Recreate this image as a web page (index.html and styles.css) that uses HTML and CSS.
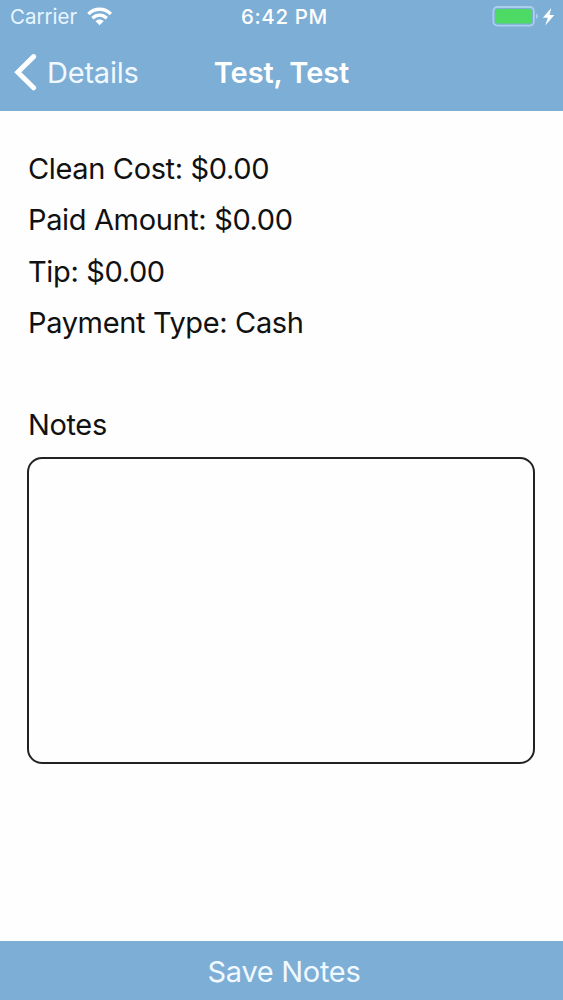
FILE: index.html
```
<!DOCTYPE html>
<html lang="en">
<head>
    <meta charset="UTF-8">
    <meta name="viewport" content="width=device-width, initial-scale=1.0">
    <title>Test, Test</title>
    <link rel="stylesheet" href="styles.css">
</head>
<body>

    <header class="header">
        <!-- Status bar -->
        <div class="status-bar">
            <div class="status-left">
                <span class="carrier">Carrier</span>
                <svg class="wifi" width="26" height="19" viewBox="0 0 26 19">
                    <path d="M1.4 7C7.8 .8 17.4 .8 23.8 7" fill="none" stroke="#fff" stroke-width="3.5"/>
                    <path d="M5.4 11.2C9.6 7.2 15.6 7.2 19.8 11.2" fill="none" stroke="#fff" stroke-width="3.3"/>
                    <path d="M8.4 14.1C10.8 11.9 14.4 11.9 16.8 14.1L12.6 18.3Z" fill="#fff"/>
                </svg>
            </div>
            <span class="clock">6:42 PM</span>
            <div class="status-right">
                <svg class="battery" width="64" height="22" viewBox="0 0 64 22">
                    <rect x="1.4" y="1" width="40.5" height="18.6" rx="4" fill="none" stroke="#a9cfea" stroke-width="1.8"/>
                    <rect x="3.6" y="3" width="36" height="14.6" rx="1.8" fill="#4cd964"/>
                    <path d="M44 7.5Q46 8.3 46 10.3Q46 12.3 44 13.1Z" fill="#a9cfea"/>
                    <path d="M59.2 2L50.8 11.8H55.8L53.2 19.4L62.4 8.9H57.6Z" fill="#fff"/>
                </svg>
            </div>
        </div>

        <!-- Navigation bar -->
        <nav class="nav-bar">
            <a class="back">
                <svg class="chevron" width="24" height="38" viewBox="0 0 24 38">
                    <path d="M20.6 3.6L4.8 19.2L20.6 34.8" fill="none" stroke="#fff" stroke-width="5" stroke-linecap="round" stroke-linejoin="miter"/>
                </svg>
                <span class="back-label">Details</span>
            </a>
            <h1 class="title">Test, Test</h1>
        </nav>
    </header>

    <main class="content">
        <p class="row">Clean Cost: $0.00</p>
        <p class="row">Paid Amount: $0.00</p>
        <p class="row">Tip: $0.00</p>
        <p class="row">Payment Type: Cash</p>

        <label class="notes-label" for="notes">Notes</label>
        <textarea class="notes" id="notes"></textarea>
    </main>

    <button class="save">Save Notes</button>

</body>
</html>
```

FILE: styles.css
```
* {
    margin: 0;
    padding: 0;
    box-sizing: border-box;
}

body {
    font-family: Inter, "Liberation Sans", sans-serif;
    font-size: 29px;
    background-color: #fefefe;
    color: #111;
    height: 100vh;
    display: flex;
    flex-direction: column;
    overflow: hidden;
}

/* Header */
.header {
    height: 111px;
    background-color: #7daed6;
    color: #fff;
}

.status-bar {
    height: 33px;
    padding-left: 10px;
    display: grid;
    grid-template-columns: 231px auto 1fr;
    align-items: center;
    font-size: 20.5px;
}

.status-left {
    display: flex;
    align-items: center;
    gap: 10px;
}

.carrier {
    color: #eaf6ff;
}

.clock {
    font-weight: 500;
    letter-spacing: 0.6px;
}

.status-right {
    display: flex;
    justify-content: flex-end;
    padding-right: 7px;
}

.nav-bar {
    height: 78px;
    padding: 0 13px;
    display: grid;
    grid-template-columns: 1fr auto 1fr;
    align-items: center;
}

.back {
    display: flex;
    align-items: center;
    gap: 10px;
    color: #f0f9ff;
    letter-spacing: -0.2px;
}

.title {
    font-size: 29px;
    font-weight: 600;
    letter-spacing: -0.1px;
}

/* Payment details */
.content {
    flex: 1;
    padding: 32px 28px 0;
    display: flex;
    flex-direction: column;
    letter-spacing: -0.36px;
}

.row {
    height: 51.3px;
    line-height: 51.3px;
}

.notes-label {
    margin-top: 51px;
    line-height: 51px;
}

.notes {
    width: 508px;
    height: 307px;
    margin: 7px 0 0 -1px;
    padding: 10px;
    border: 2px solid #222;
    border-radius: 15px;
    background-color: #fefefe;
    font: inherit;
    resize: none;
}

/* Bottom button */
.save {
    height: 59px;
    padding: 2px 0 0 5px;
    border: none;
    background-color: #7daed6;
    color: #f0f9ff;
    font: inherit;
    letter-spacing: -0.3px;
}
```
